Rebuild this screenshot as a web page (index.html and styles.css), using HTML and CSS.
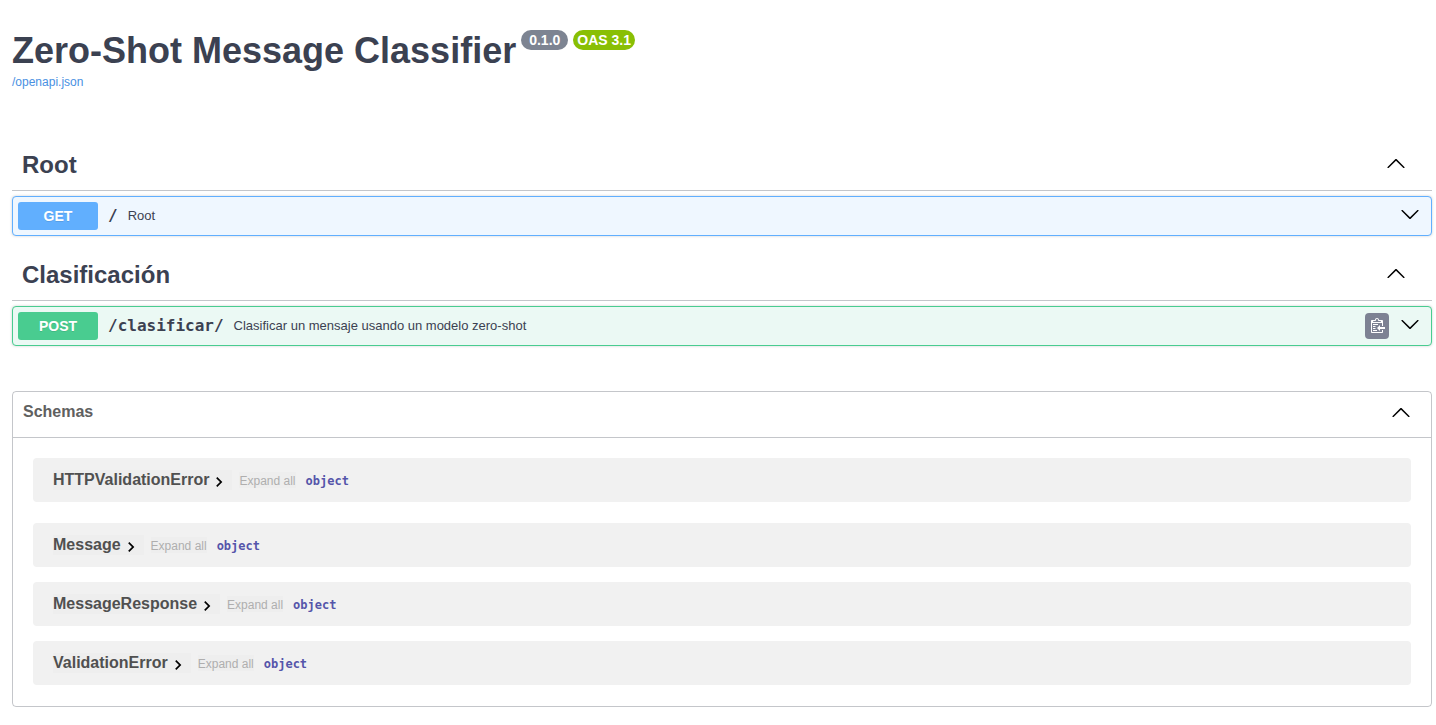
FILE: index.html
```html
<!DOCTYPE html>
<html lang="es">
<head>
<meta charset="utf-8">
<title>Zero-Shot Message Classifier</title>
<link rel="stylesheet" href="styles.css">
</head>
<body>
<svg class="defs" aria-hidden="true">
  <symbol id="arrow-up" viewBox="0 0 20 20"><path d="M17.418 14.908C17.69 15.176 18.127 15.176 18.397 14.908C18.667 14.64 18.668 14.207 18.397 13.939L10.489 6.109C10.219 5.841 9.782 5.841 9.51 6.109L1.602 13.939C1.332 14.207 1.332 14.64 1.602 14.908C1.873 15.176 2.311 15.176 2.581 14.908L10 7.767L17.418 14.908Z"/></symbol>
  <symbol id="arrow-down" viewBox="0 0 20 20"><path d="M17.418 6.109C17.69 5.841 18.127 5.841 18.397 6.109C18.667 6.377 18.668 6.811 18.397 7.079L10.489 14.908C10.219 15.176 9.782 15.176 9.51 14.908L1.602 7.079C1.332 6.811 1.332 6.377 1.602 6.109C1.873 5.841 2.311 5.841 2.581 6.109L10 13.25L17.418 6.109Z"/></symbol>
  <symbol id="chevron" viewBox="0 0 24 24"><path d="M10 6L8.59 7.41 13.17 12l-4.58 4.59L10 18l6-6z"/></symbol>
</svg>
<main class="page">
  <header class="info">
    <div class="title-row">
      <h1 class="title">Zero-Shot Message Classifier</h1>
      <span class="badge badge-version">0.1.0</span>
      <span class="badge badge-oas">OAS 3.1</span>
    </div>
    <a class="spec-link" href="/openapi.json">/openapi.json</a>
  </header>

  <section class="tag">
    <div class="tag-header">
      <h2 class="tag-name">Root</h2>
      <button class="icon-button" aria-label="Collapse Root"><svg class="arrow"><use href="#arrow-up"/></svg></button>
    </div>
    <div class="operation get">
      <span class="method">GET</span>
      <a class="path" href="#root">/</a>
      <span class="summary">Root</span>
      <button class="icon-button toggle" aria-label="Expand operation"><svg class="arrow"><use href="#arrow-down"/></svg></button>
    </div>
  </section>

  <section class="tag">
    <div class="tag-header">
      <h2 class="tag-name">Clasificación</h2>
      <button class="icon-button" aria-label="Collapse Clasificación"><svg class="arrow"><use href="#arrow-up"/></svg></button>
    </div>
    <div class="operation post">
      <span class="method">POST</span>
      <a class="path" href="#clasificar">/clasificar/</a>
      <span class="summary">Clasificar un mensaje usando un modelo zero-shot</span>
      <button class="copy" aria-label="Copy to clipboard"><svg width="16" height="16" viewBox="0 0 16 16"><path fill="#fff" transform="translate(2 -1)" d="M2 13h4v1H2v-1zm5-6H2v1h5V7zm2 3V8l-3 3 3 3v-2h5v-2H9zM4.5 9H2v1h2.5V9zM2 12h2.5v-1H2v1zm9 1h1v2c-.02.28-.11.52-.3.7-.19.18-.42.28-.7.3H1c-.55 0-1-.45-1-1V4c0-.55.45-1 1-1h3c0-1.11.89-2 2-2 1.11 0 2 .89 2 2h3c.55 0 1 .45 1 1v5h-1V6H1v9h10v-2zM2 5h8c0-.55-.45-1-1-1H8c-.55 0-1-.45-1-1s-.45-1-1-1-1 .45-1 1-.45 1-1 1H3c-.55 0-1 .45-1 1z"/></svg></button>
      <button class="icon-button toggle" aria-label="Expand operation"><svg class="arrow"><use href="#arrow-down"/></svg></button>
    </div>
  </section>

  <section class="schemas">
    <div class="schemas-header">
      <h2 class="schemas-title">Schemas</h2>
      <button class="icon-button" aria-label="Collapse schemas"><svg class="arrow"><use href="#arrow-up"/></svg></button>
    </div>
    <div class="schema-list">
      <article class="schema first"><button class="schema-name">HTTPValidationError<svg class="chevron"><use href="#chevron"/></svg></button><button class="expand">Expand all</button><strong class="type">object</strong></article>
      <article class="schema"><button class="schema-name">Message<svg class="chevron"><use href="#chevron"/></svg></button><button class="expand">Expand all</button><strong class="type">object</strong></article>
      <article class="schema"><button class="schema-name">MessageResponse<svg class="chevron"><use href="#chevron"/></svg></button><button class="expand">Expand all</button><strong class="type">object</strong></article>
      <article class="schema"><button class="schema-name">ValidationError<svg class="chevron"><use href="#chevron"/></svg></button><button class="expand">Expand all</button><strong class="type">object</strong></article>
    </div>
  </section>
</main>
</body>
</html>
```

FILE: styles.css
```css
* { box-sizing: border-box; }
body { margin: 0; background: #fff; color: #3b4151; font-family: "Liberation Sans", Arial, sans-serif; }
button { margin: 0; padding: 0; border: 0; background: none; font-family: inherit; cursor: pointer; }
a { text-decoration: none; }
h1, h2 { margin: 0; }
.defs { display: none; }
.page { padding: 30px 4px 18px 12px; }

.info { margin-bottom: 51px; }
.title-row { display: flex; align-items: flex-start; gap: 5px; }
.title { font-size: 36px; line-height: 41px; }
.badge { height: 20px; border-radius: 10px; color: #fff; font-size: 14px; font-weight: 700; line-height: 20px; }
.badge-version { padding: 0 8px; background: #7d8492; }
.badge-oas { padding: 0 4px; background: #89bf04; }
.spec-link { display: block; margin-top: 4px; color: #4990e2; font-size: 12px; line-height: 15px; }

.tag { margin-bottom: 15px; }
.tag-header { display: flex; align-items: center; justify-content: space-between; height: 50px; margin-bottom: 5px; padding: 0 26px 2px 10px; border-bottom: 1px solid rgba(59, 65, 81, .3); }
.tag-name { font-size: 24px; line-height: 30px; }
.icon-button { display: flex; }
.tag-header .icon-button { padding-bottom: 3px; }
.arrow { display: block; width: 20px; height: 20px; fill: #000; }

.operation { display: flex; align-items: center; height: 40px; padding: 0 11px 0 5px; border: 1px solid; border-radius: 4px; box-shadow: 0 0 3px rgba(0, 0, 0, .19); }
.get { border-color: #61affe; background: #eff7ff; }
.post { border-color: #49cc90; background: #ebf9f4; }
.method { width: 80px; border-radius: 3px; color: #fff; font-size: 14px; font-weight: 700; line-height: 28px; text-align: center; text-shadow: 0 1px 0 rgba(0, 0, 0, .1); }
.get .method { background: #61affe; }
.post .method { background: #49cc90; }
.path { margin: 0 10px; color: #3b4151; font-family: "DejaVu Sans Mono", monospace; font-size: 16px; font-weight: 700; line-height: 20px; }
.summary { flex: 1; font-size: 13px; line-height: 16px; }
.toggle { padding-bottom: 4px; }
.copy { display: flex; align-items: center; justify-content: center; width: 24px; height: 26px; margin-right: 11px; padding-right: 0; border-radius: 4px; background: #7d8293; }

.schemas { margin-top: 45px; border: 1px solid rgba(59, 65, 81, .3); border-radius: 4px; }
.schemas-header { display: flex; align-items: center; justify-content: space-between; height: 46px; padding: 0 20px 5px 10px; border-bottom: 1px solid rgba(59, 65, 81, .3); }
.schemas-title { color: #606060; font-size: 16px; line-height: 20px; }
.schema-list { display: flex; flex-direction: column; gap: 15px; padding: 20px 20px 21px; }
.schema { display: flex; align-items: center; height: 44px; padding: 0 20px; border-radius: 4px; background: #f1f1f1; }
.schema.first { margin-bottom: 6px; }
.schema-name { display: flex; align-items: center; height: 20px; background: #eee; color: #505050; font-size: 16px; font-weight: 700; line-height: 20px; }
.chevron { width: 20px; height: 20px; margin: 3px 3px 0 0; }
.expand { margin-left: 7px; padding-top: 2px; background: #eee; color: #afaeae; font-size: 12px; line-height: 14px; }
.type { margin-left: 10px; padding-top: 2px; color: #5555aa; font-family: "DejaVu Sans Mono", monospace; font-size: 12px; line-height: 16px; }
```
